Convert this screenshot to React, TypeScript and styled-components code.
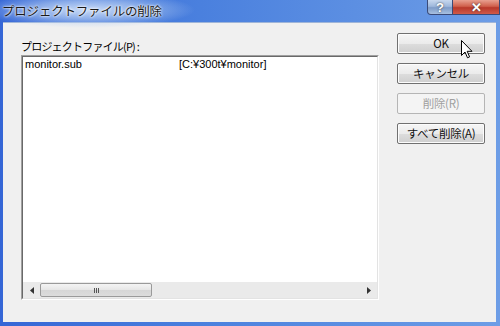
import React from "react";
import styled, { createGlobalStyle } from "styled-components";

const Global = createGlobalStyle`
  html, body { margin: 0; padding: 0; background: #fff; }
  body { font-family: "Noto Sans CJK JP", "Liberation Sans", sans-serif; }
`;

const Window = styled.div`
  position: relative;
  width: 500px;
  height: 326px;
  box-sizing: border-box;
  display: flex;
  flex-direction: column;
  background: linear-gradient(90deg, #3566d6 0%, #4a80de 40%, #6d9de6 100%);
  overflow: hidden;
`;

const TitleBar = styled.div`
  height: 22px;
  display: flex;
  align-items: flex-start;
  position: relative;
`;

const TitleGlow = styled.div`
  position: absolute;
  left: -20px;
  top: -8px;
  width: 215px;
  height: 36px;
  background: radial-gradient(ellipse closest-side at center, rgba(215, 230, 250, 0.9) 0%, rgba(180, 205, 242, 0.65) 50%, rgba(120, 160, 230, 0) 100%);
`;

const Title = styled.div`
  position: relative;
  margin: 2px 0 0 2px;
  font-size: 12.5px;
  line-height: 18px;
  color: #1a1a1a;
  letter-spacing: -0.2px;
  text-shadow: 0 0 3px #fff, 0 0 2px #fff;
`;

const Caption = styled.div`
  margin-left: auto;
  display: flex;
  height: 15px;
`;

const CapBtn = styled.div<{ $close?: boolean }>`
  width: ${(p) => (p.$close ? "47px" : "26px")};
  height: 15px;
  box-sizing: border-box;
  border: 1px solid #3a4a78;
  border-top: none;
  border-left: ${(p) => (p.$close ? "none" : "1px solid #3a4a78")};
  border-radius: ${(p) => (p.$close ? "0" : "0 0 0 4px")};
  background: ${(p) =>
    p.$close
      ? "linear-gradient(180deg, #e8a090 0%, #d0604c 45%, #b8382a 55%, #d05a48 100%)"
      : "linear-gradient(180deg, #c8d8ee 0%, #9fb8dc 45%, #7e9cc8 55%, #a8c0e0 100%)"};
  color: #fff;
  font-family: "Liberation Sans", sans-serif;
  font-weight: bold;
  font-size: 13px;
  line-height: 13px;
  display: flex;
  align-items: center;
  justify-content: center;
  text-shadow: 0 0 2px #333;
`;

const Client = styled.div`
  flex: 1;
  margin: 0 4px 4px 3px;
  background: #f0f0f0;
  display: flex;
  border-top: 1px solid #9fb5d8;
`;

const LeftCol = styled.div`
  display: flex;
  flex-direction: column;
  padding: 15px 0 0 18px;
`;

const Label = styled.div`
  font-size: 11px;
  line-height: 16px;
  letter-spacing: -0.8px;
  color: #000;
  height: 17px;
`;

const ListBox = styled.div`
  width: 358px;
  height: 245px;
  box-sizing: border-box;
  border-top: 1px solid #a0a0a0;
  border-left: 1px solid #a0a0a0;
  border-right: 1px solid #ffffff;
  border-bottom: 1px solid #ffffff;
  display: flex;
  flex-direction: column;
`;

const ListInner = styled.div`
  flex: 1;
  box-sizing: border-box;
  border-top: 1px solid #696969;
  border-left: 1px solid #696969;
  border-right: 1px solid #e3e3e3;
  border-bottom: 1px solid #e3e3e3;
  background: #fff;
  display: flex;
  flex-direction: column;
`;

const Items = styled.div`
  flex: 1;
  padding: 1px 0 0 2px;
`;

const Item = styled.div`
  display: flex;
  font-family: "Liberation Sans", "Noto Sans CJK JP", sans-serif;
  font-size: 11px;
  line-height: 12px;
  color: #000;
`;

const Col1 = styled.span`
  width: 154px;
`;

const HScroll = styled.div`
  height: 16px;
  display: flex;
  align-items: center;
  background: #eaeaea;
`;

const Arrow = styled.div`
  width: 17px;
  height: 16px;
  display: flex;
  align-items: center;
  justify-content: center;
`;

const Track = styled.div`
  flex: 1;
  height: 16px;
  display: flex;
  align-items: center;
`;

const Thumb = styled.div`
  width: 112px;
  height: 14px;
  box-sizing: border-box;
  border: 1px solid #9a9a9a;
  border-radius: 2px;
  background: linear-gradient(180deg, #f4f4f4 0%, #e6e6e6 50%, #d6d6d6 51%, #dcdcdc 100%);
  display: flex;
  align-items: center;
  justify-content: center;
  gap: 1px;
`;

const Grip = styled.span`
  width: 1px;
  height: 5px;
  background: #555;
`;

const RightCol = styled.div`
  display: flex;
  flex-direction: column;
  gap: 9px;
  padding: 10px 0 0 18px;
`;

const Button = styled.div<{ $disabled?: boolean }>`
  width: 88px;
  height: 21px;
  box-sizing: border-box;
  border: 1px solid ${(p) => (p.$disabled ? "#b5b5b5" : "#707070")};
  border-radius: 2px;
  background: ${(p) =>
    p.$disabled
      ? "#f4f4f4"
      : "linear-gradient(180deg, #f6f6f6 0%, #ebebeb 50%, #dddddd 51%, #cfcfcf 100%)"};
  box-shadow: inset 0 0 0 1px ${(p) => (p.$disabled ? "#f4f4f4" : "#fcfcfc")};
  font-size: 11.5px;
  line-height: 18px;
  letter-spacing: -0.3px;
  color: ${(p) => (p.$disabled ? "#a0a0a0" : "#111")};
  text-align: center;
`;

const Cursor = styled.svg`
  position: absolute;
  left: 461px;
  top: 40px;
`;

export default function App() {
  return (
    <>
      <Global />
      <Window>
        <TitleBar>
          <TitleGlow />
          <Title>プロジェクトファイルの削除</Title>
          <Caption>
            <CapBtn>?</CapBtn>
            <CapBtn $close>✕</CapBtn>
          </Caption>
        </TitleBar>
        <Client>
          <LeftCol>
            <Label>プロジェクトファイル(P) :</Label>
            <ListBox>
              <ListInner>
                <Items>
                  <Item>
                    <Col1>monitor.sub</Col1>
                    <span>[C:¥300t¥monitor]</span>
                  </Item>
                </Items>
                <HScroll>
                  <Arrow>
                    <svg width="4" height="7" viewBox="0 0 4 7">
                      <polygon points="4,0 0,3.5 4,7" fill="#333" />
                    </svg>
                  </Arrow>
                  <Track>
                    <Thumb>
                      <Grip />
                      <Grip />
                      <Grip />
                    </Thumb>
                  </Track>
                  <Arrow>
                    <svg width="4" height="7" viewBox="0 0 4 7">
                      <polygon points="0,0 4,3.5 0,7" fill="#333" />
                    </svg>
                  </Arrow>
                </HScroll>
              </ListInner>
            </ListBox>
          </LeftCol>
          <RightCol>
            <Button>OK</Button>
            <Button>キャンセル</Button>
            <Button $disabled>削除(R)</Button>
            <Button>すべて削除(A)</Button>
          </RightCol>
        </Client>
        <Cursor width="12" height="19" viewBox="0 0 12 19">
          <path
            d="M0.5 0.5 L0.5 15.5 L4 12 L6.5 17.8 L8.6 16.9 L6.2 11.3 L11 11.3 Z"
            fill="#fff"
            stroke="#000"
            strokeWidth="1"
            strokeLinejoin="miter"
          />
        </Cursor>
      </Window>
    </>
  );
}
